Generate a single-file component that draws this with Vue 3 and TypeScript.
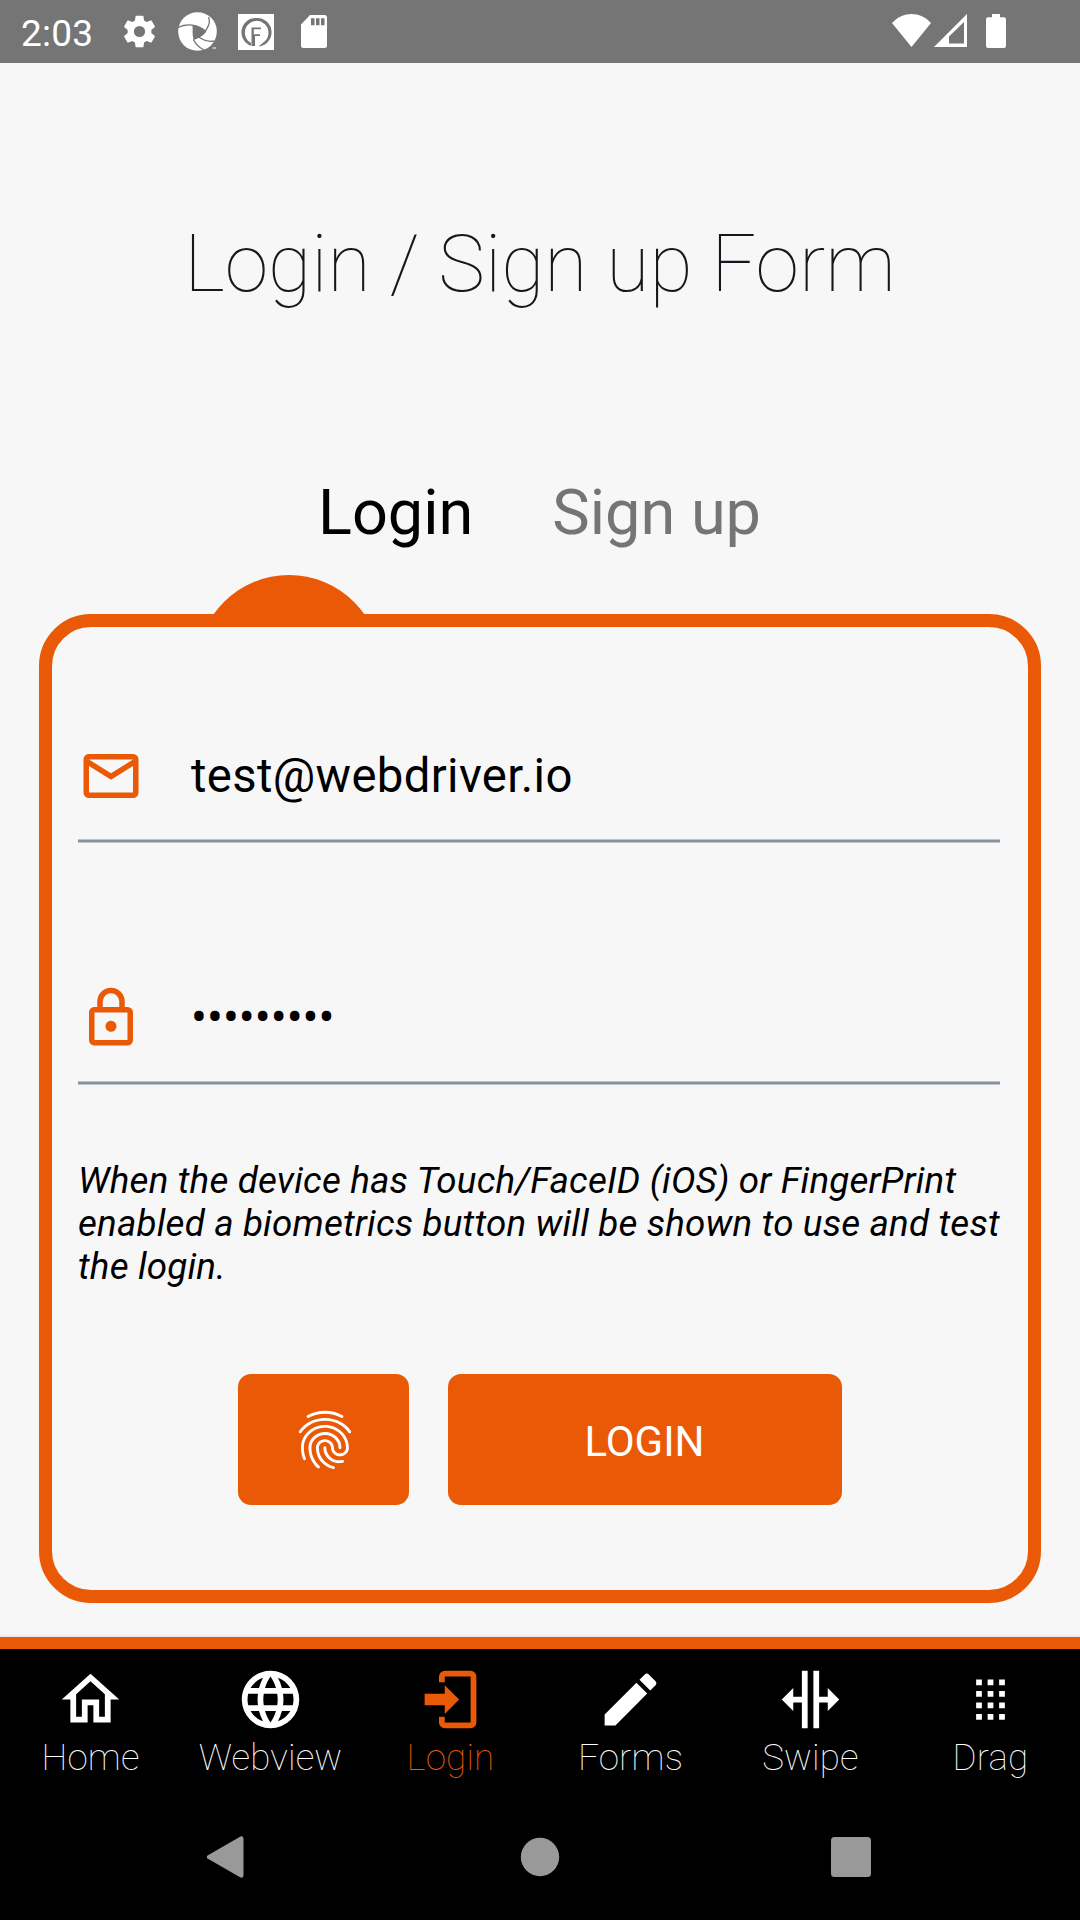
<script setup lang="ts">
interface NavTab {
  label: string
  path: string
  active?: boolean
}

const navTabs: NavTab[] = [
  {
    label: 'Home',
    path: 'M12 5.69L17 10.19V18H15V12H9V18H7V10.19L12 5.69M12 3L2 12H5V20H11V14H13V20H19V12H22L12 3Z',
  },
  {
    label: 'Webview',
    path: 'M16.36,14C16.44,13.34 16.5,12.68 16.5,12C16.5,11.32 16.44,10.66 16.36,10H19.74C19.9,10.64 20,11.31 20,12C20,12.69 19.9,13.36 19.74,14M14.59,19.56C15.19,18.45 15.65,17.25 15.97,16H18.92C17.96,17.65 16.43,18.93 14.59,19.56M14.34,14H9.66C9.56,13.34 9.5,12.68 9.5,12C9.5,11.32 9.56,10.65 9.66,10H14.34C14.43,10.65 14.5,11.32 14.5,12C14.5,12.68 14.43,13.34 14.34,14M12,19.96C11.17,18.76 10.5,17.43 10.09,16H13.91C13.5,17.43 12.83,18.76 12,19.96M8,8H5.08C6.03,6.34 7.57,5.06 9.4,4.44C8.8,5.55 8.35,6.75 8,8M5.08,16H8C8.35,17.25 8.8,18.45 9.4,19.56C7.57,18.93 6.03,17.65 5.08,16M4.26,14C4.1,13.36 4,12.69 4,12C4,11.31 4.1,10.64 4.26,10H7.64C7.56,10.66 7.5,11.32 7.5,12C7.5,12.68 7.56,13.34 7.64,14M12,4.03C12.83,5.23 13.5,6.57 13.91,8H10.09C10.5,6.57 11.17,5.23 12,4.03M18.92,8H15.97C15.65,6.75 15.19,5.55 14.59,4.44C16.43,5.07 17.96,6.34 18.92,8M12,2C6.47,2 2,6.5 2,12A10,10 0 0,0 12,22A10,10 0 0,0 22,12A10,10 0 0,0 12,2Z',
  },
  {
    label: 'Login',
    path: 'M10,17V14H3V10H10V7L15,12L10,17M10,2H19A2,2 0 0,1 21,4V20A2,2 0 0,1 19,22H10A2,2 0 0,1 8,20V18H10V20H19V4H10V6H8V4A2,2 0 0,1 10,2Z',
    active: true,
  },
  {
    label: 'Forms',
    path: 'M20.71,7.04C21.1,6.65 21.1,6 20.71,5.63L18.37,3.29C18,2.9 17.35,2.9 16.96,3.29L15.12,5.12L18.87,8.87M3,17.25V21H6.75L17.81,9.93L14.06,6.18L3,17.25Z',
  },
  {
    label: 'Swipe',
    path: 'M18,16V13H15V22H13V2H15V11H18V8L22,12L18,16M2,12L6,16V13H9V22H11V2H9V11H6V8L2,12Z',
  },
  {
    label: 'Drag',
    path: 'M7,5H9V7H7ZM11,5H13V7H11ZM15,5H17V7H15ZM7,9H9V11H7ZM11,9H13V11H11ZM15,9H17V11H15ZM7,13H9V15H7ZM11,13H13V15H11ZM15,13H17V15H15ZM7,17H9V19H7ZM11,17H13V19H11ZM15,17H17V19H15Z',
  },
]

const email = 'test@webdriver.io'
const maskedPassword = '•'.repeat(9)
</script>

<template>
  <div class="screen">
    <header class="status">
      <span class="clock">2:03</span>
      <svg class="gear" viewBox="2 2 20 20" width="33" height="33" fill="#fff">
        <path d="M19.14 12.94c.04-.3.06-.61.06-.94 0-.32-.02-.64-.07-.94l2.03-1.58c.18-.14.23-.41.12-.61l-1.92-3.32c-.12-.22-.37-.29-.59-.22l-2.39.96c-.5-.38-1.03-.7-1.62-.94l-.36-2.54c-.04-.24-.24-.41-.48-.41h-3.84c-.24 0-.43.17-.47.41l-.36 2.54c-.59.24-1.13.57-1.62.94l-2.39-.96c-.22-.08-.47 0-.59.22L2.74 8.87c-.12.21-.08.47.12.61l2.03 1.58c-.05.3-.09.63-.09.94s.02.64.07.94l-2.03 1.58c-.18.14-.23.41-.12.61l1.92 3.32c.12.22.37.29.59.22l2.39-.96c.5.38 1.03.7 1.62.94l.36 2.54c.05.24.24.41.48.41h3.84c.24 0 .44-.17.47-.41l.36-2.54c.59-.24 1.13-.56 1.62-.94l2.39.96c.22.08.47 0 .59-.22l1.92-3.32c.12-.22.07-.47-.12-.61l-2.01-1.58zM12 15.4a3.4 3.4 0 1 1 0-6.8 3.4 3.4 0 0 1 0 6.8z" />
      </svg>
      <svg class="swirl" viewBox="0 0 39 39" width="39" height="39">
        <circle cx="19.5" cy="19.5" r="19.3" fill="#fff" />
        <g fill="none" stroke="#757575" stroke-width="1.3">
          <path d="M0 15.5C9 11 20 12.500 28 19.500" />
          <path d="M30.500 5C33.500 12 28 22 15.500 27.500" />
          <path d="M36 29C27 30.500 15 25 15 13" />
          <path d="M15.500 27.500C17 31 21 35.500 26 38" />
        </g>
        <path d="M15.300 13.200C20 13.500 25 16.500 28 20C25 24 20 26.500 15.500 27.500C14.300 23 14.300 17.500 15.300 13.200Z" fill="#757575" />
        <path d="M34.500 36h3.500" stroke="#fff" stroke-width="1" />
      </svg>
      <svg class="badge-f" viewBox="0 0 36 36" width="36" height="36">
        <rect width="36" height="36" fill="#fff" />
        <path fill-rule="evenodd" d="M18 4A14.300 14.300 0 0 0 13 31.800V29A11.800 11.800 0 1 1 26.500 27.500L20.500 32.500A14.300 14.300 0 0 0 18 4Z" fill="#757575" />
        <path d="M13.500 32V13.500H23V15.300H15.800V20.200H22V22H17V32Z" fill="#757575" />
      </svg>
      <svg class="sd" viewBox="0 0 26 33" width="26" height="33">
        <path d="M9 0H23.500A2.500 2.500 0 0 1 26 2.500V30.500A2.500 2.500 0 0 1 23.500 33H2.500A2.500 2.500 0 0 1 0 30.500V9.500Z" fill="#fff" />
        <path d="M10 3.300h3.500v7H10zM15 3.300h3.500v7H15zM20 3.300h3.500v7H20z" fill="#757575" />
      </svg>
      <span class="spacer" />
      <svg class="wifi" viewBox="0 0 39 33" width="39" height="33">
        <path d="M0 9C11-3 28-3 39 9L19.500 33Z" fill="#fff" />
      </svg>
      <svg class="signal" viewBox="0 0 33 33" width="33" height="33">
        <path fill-rule="evenodd" d="M33 0V33H0ZM30 8L15 22.500V29.500H30Z" fill="#fff" />
      </svg>
      <svg class="battery" viewBox="0 0 20 34" width="20" height="34">
        <path d="M6 0h8v3.300h4A2 2 0 0 1 20 5.300V32a2 2 0 0 1-2 2H2a2 2 0 0 1-2-2V5.300a2 2 0 0 1 2-2h4Z" fill="#fff" />
      </svg>
    </header>

    <main class="content">
      <h1 class="title">Login / Sign up Form</h1>

      <div class="tabs">
        <span class="tab tab-active">Login</span>
        <span class="tab tab-signup">Sign up</span>
      </div>

      <div class="bump-row"><span class="bump" /></div>

      <section class="card">
        <div class="field">
          <svg viewBox="0 0 24 24" width="66" height="66" fill="#ea5906">
            <path d="M4,4H20A2,2 0 0,1 22,6V18A2,2 0 0,1 20,20H4C2.89,20 2,19.1 2,18V6C2,4.89 2.89,4 4,4M12,11L20,6H4L12,11M4,18H20V8.37L12,13.36L4,8.37V18Z" />
          </svg>
          <span class="value email">{{ email }}</span>
        </div>
        <div class="rule" />

        <div class="field field-password">
          <svg viewBox="0 0 24 24" width="66" height="66" fill="#ea5906">
            <path d="M12,17C10.89,17 10,16.1 10,15C10,13.89 10.89,13 12,13A2,2 0 0,1 14,15A2,2 0 0,1 12,17M18,20V10H6V20H18M18,8A2,2 0 0,1 20,10V20A2,2 0 0,1 18,22H6C4.89,22 4,21.1 4,20V10C4,8.89 4.89,8 6,8H7V6A5,5 0 0,1 12,1A5,5 0 0,1 17,6V8H18M12,3A3,3 0 0,0 9,6V8H15V6A3,3 0 0,0 12,3Z" />
          </svg>
          <span class="value">{{ maskedPassword }}</span>
        </div>
        <div class="rule" />

        <p class="hint">
          When the device has Touch/FaceID (iOS) or FingerPrint<br />
          enabled a biometrics button will be shown to use and test<br />
          the login.
        </p>

        <div class="actions">
          <button class="btn btn-touch" aria-label="Biometrics">
            <svg viewBox="0 0 24 24" width="70" height="70" fill="#fff">
              <path d="M17.81 4.47c-.08 0-.16-.02-.23-.06C15.66 3.42 14 3 12.01 3c-1.98 0-3.86.47-5.57 1.41-.24.13-.54.04-.68-.2-.13-.24-.04-.55.2-.68C7.82 2.52 9.86 2 12.01 2c2.13 0 3.99.47 6.03 1.52.25.13.34.43.21.67-.09.18-.26.28-.44.28zM3.5 9.72c-.1 0-.2-.03-.29-.09-.23-.16-.28-.47-.12-.7.99-1.4 2.25-2.5 3.75-3.27C9.98 4.04 14 4.03 17.15 5.65c1.5.77 2.76 1.86 3.75 3.25.16.22.11.54-.12.7-.23.16-.54.11-.7-.12-.9-1.26-2.04-2.25-3.39-2.94-2.87-1.47-6.54-1.47-9.4.01-1.36.7-2.5 1.7-3.4 2.96-.08.14-.23.21-.39.21zm6.25 12.07c-.13 0-.26-.05-.35-.15-.87-.87-1.34-1.43-2.01-2.64-.69-1.23-1.05-2.73-1.05-4.34 0-2.97 2.54-5.39 5.66-5.39s5.66 2.42 5.66 5.39c0 .28-.22.5-.5.5s-.5-.22-.5-.5c0-2.42-2.09-4.39-4.66-4.39-2.57 0-4.66 1.97-4.66 4.39 0 1.44.32 2.77.93 3.85.64 1.15 1.08 1.64 1.85 2.42.19.2.19.51 0 .71-.11.1-.24.15-.37.15zm7.17-1.85c-1.19 0-2.24-.3-3.1-.89-1.49-1.01-2.38-2.65-2.38-4.39 0-.28.22-.5.5-.5s.5.22.5.5c0 1.41.72 2.74 1.94 3.56.71.48 1.54.71 2.54.71.24 0 .64-.03 1.04-.1.27-.05.53.13.58.41.05.27-.13.53-.41.58-.57.11-1.07.12-1.21.12zM14.91 22c-.04 0-.09-.01-.13-.02-1.59-.44-2.63-1.03-3.72-2.1-1.4-1.39-2.17-3.24-2.17-5.22 0-1.62 1.38-2.94 3.08-2.94 1.7 0 3.08 1.32 3.08 2.94 0 1.07.93 1.94 2.08 1.94s2.08-.87 2.08-1.94c0-3.77-3.25-6.83-7.25-6.83-2.84 0-5.44 1.58-6.61 4.03-.39.81-.59 1.76-.59 2.8 0 .78.07 2.01.67 3.61.1.26-.03.55-.29.64-.26.1-.55-.04-.64-.29-.49-1.31-.73-2.61-.73-3.96 0-1.2.23-2.29.68-3.24 1.33-2.79 4.28-4.6 7.51-4.6 4.55 0 8.25 3.51 8.25 7.83 0 1.62-1.38 2.94-3.08 2.94s-3.08-1.32-3.08-2.94c0-1.07-.93-1.94-2.08-1.94s-2.08.87-2.08 1.94c0 1.71.66 3.31 1.87 4.51.95.94 1.86 1.46 3.27 1.85.27.07.42.35.35.61-.05.23-.26.38-.47.38z" />
            </svg>
          </button>
          <button class="btn btn-login">LOGIN</button>
        </div>
      </section>
    </main>

    <nav class="tabbar">
      <div v-for="tab in navTabs" :key="tab.label" class="nav-item" :class="{ active: tab.active }">
        <svg viewBox="0 0 24 24" width="69" height="69" fill="currentColor"><path :d="tab.path" /></svg>
        <span class="nav-label">{{ tab.label }}</span>
      </div>
    </nav>

    <footer class="system">
      <svg viewBox="0 0 38 42" width="38" height="42">
        <path d="M1.500 19.500L34.500 0.500Q37.500 -0.500 37.500 3V39Q37.500 42.500 34.500 41.500L1.500 22.500Q0 21 1.500 19.500Z" fill="#999" />
      </svg>
      <svg class="sys-home" viewBox="0 0 40 40" width="40" height="40"><circle cx="20" cy="20" r="19.200" fill="#999" /></svg>
      <svg class="sys-recent" viewBox="0 0 40 40" width="40" height="40"><rect width="40" height="40" rx="3.500" fill="#999" /></svg>
    </footer>
  </div>
</template>

<style>
body {
  background: #000;
}
</style>

<style scoped>
.screen {
  width: 1080px;
  height: 1920px;
  display: flex;
  flex-direction: column;
  overflow: hidden;
  background: #f7f7f7;
  font-family: Roboto, sans-serif;
  color: #000;
}

svg {
  display: block;
  flex: none;
}

.status {
  height: 63px;
  flex: none;
  box-sizing: border-box;
  display: flex;
  align-items: flex-start;
  padding: 14px 74px 0 21px;
  background: #757575;
}

.clock {
  width: 102px;
  margin-top: -1px;
  font-size: 37px;
  line-height: 41px;
  letter-spacing: 0.2px;
  color: #fff;
}

.gear {
  margin-top: 1px;
}

.swirl {
  margin: -2px 0 0 22px;
}

.badge-f {
  margin-left: 21px;
}

.sd {
  margin: 1px 0 0 27px;
}

.spacer {
  flex: 1;
}

.signal {
  margin-left: 3px;
}

.battery {
  margin-left: 19px;
}

.content {
  height: 1574px;
  flex: none;
  display: flex;
  flex-direction: column;
}

.title {
  margin: 151px 0 0;
  font-size: 78.75px;
  line-height: 101px;
  font-weight: 100;
  text-align: center;
  color: #16171c;
}

.tabs {
  display: flex;
  gap: 79px;
  margin-top: 168px;
  padding-left: 318px;
  font-size: 63px;
  line-height: 60px;
  white-space: nowrap;
}

.tab-signup {
  color: #757575;
}

.bump-row {
  height: 39px;
  margin-top: 32px;
  padding-left: 197px;
  overflow: hidden;
}

.bump {
  display: block;
  width: 184px;
  height: 184px;
  border-radius: 50%;
  background: #ea5906;
}

.card {
  height: 989px;
  flex: none;
  box-sizing: border-box;
  margin: 0 39px;
  padding: 116px 28px 0 26px;
  border: 13px solid #ea5906;
  border-radius: 52px;
}

.field {
  height: 66px;
  display: flex;
  align-items: center;
}

.field-password {
  margin-top: 142px;
}

.value {
  margin-left: 47px;
  font-size: 47.25px;
  line-height: 66px;
}

.email {
  letter-spacing: 0.35px;
}

.rule {
  height: 2px;
  margin-top: 30px;
  border-top: 1px solid #bcc3ca;
  border-bottom: 1px solid #bcc3ca;
  background: #8592a0;
}

.hint {
  margin: 74px 0 0;
  font-size: 36.75px;
  line-height: 43px;
  letter-spacing: 0.18px;
  font-style: italic;
  white-space: nowrap;
}

.actions {
  display: flex;
  gap: 39px;
  margin-top: 86px;
  padding-left: 160px;
}

.btn {
  height: 131px;
  box-sizing: border-box;
  display: flex;
  align-items: center;
  justify-content: center;
  padding: 0;
  border: 0;
  border-radius: 13px;
  background: #ea5906;
  color: #fff;
  font-family: inherit;
  font-size: 42px;
}

.btn-touch {
  width: 171px;
  padding-left: 2px;
}

.btn-login {
  width: 394px;
  padding: 4px 1px 0 0;
}

.tabbar {
  height: 141px;
  flex: none;
  display: flex;
  border-top: 12px solid #ea5906;
  background: #000;
  color: #fff;
  box-shadow: 0 0 4px rgba(0, 0, 0, 0.15);
}

.nav-item {
  width: 180px;
  display: flex;
  flex-direction: column;
  align-items: center;
  padding-top: 15.5px;
}

.nav-item.active {
  color: #ea5906;
}

.nav-label {
  margin-top: 2px;
  padding-left: 1px;
  font-size: 36.75px;
  line-height: 44px;
  font-weight: 100;
  letter-spacing: 0.15px;
}

.system {
  flex: 1;
  display: flex;
  align-items: center;
  padding: 3px 0 0 206px;
  background: #000;
}

.sys-home {
  margin-left: 276px;
}

.sys-recent {
  margin-left: 271px;
}
</style>
